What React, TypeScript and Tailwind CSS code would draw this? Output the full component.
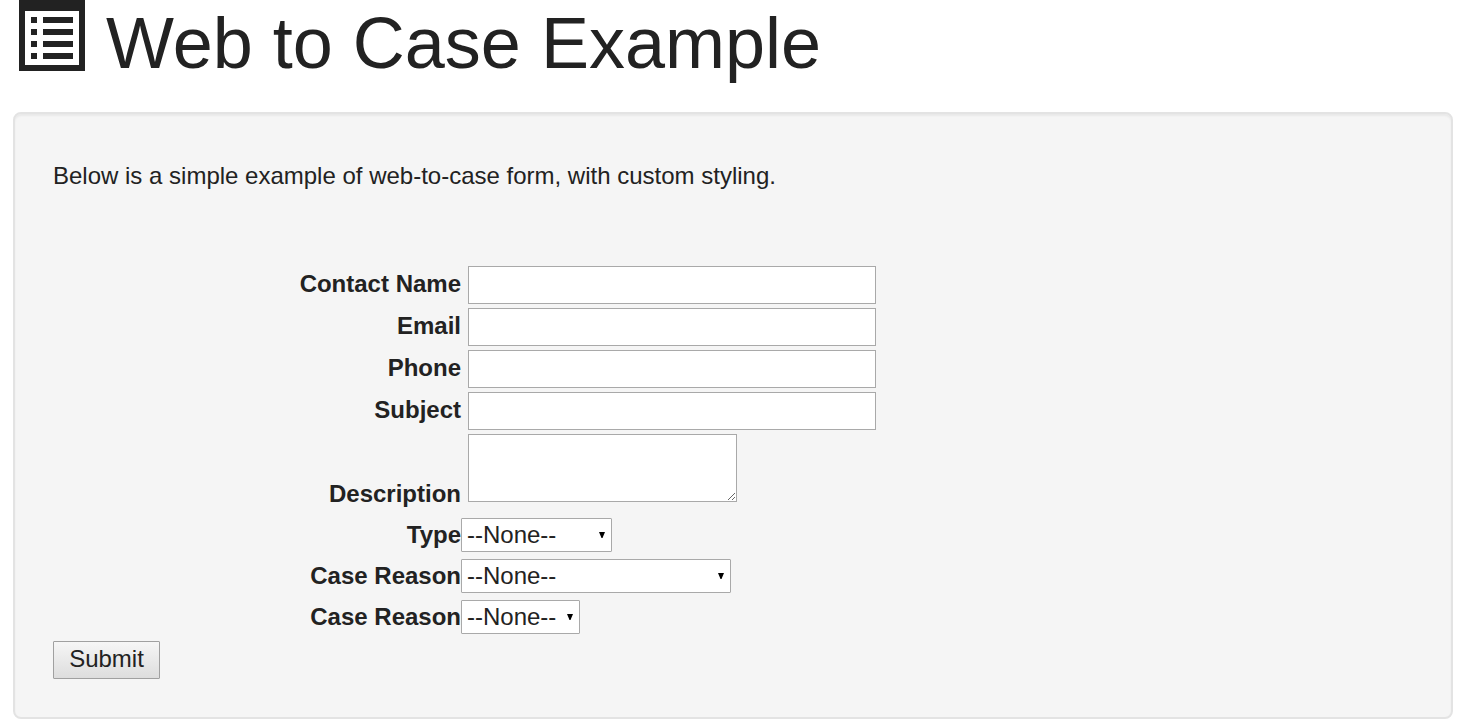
import type { ReactNode } from 'react';

const textFields = [
  { id: 'name', label: 'Contact Name', type: 'text' },
  { id: 'email', label: 'Email', type: 'email' },
  { id: 'phone', label: 'Phone', type: 'tel' },
  { id: 'subject', label: 'Subject', type: 'text' },
];

const selectFields = [
  { id: 'type', label: 'Type', width: 'w-[151px]' },
  { id: 'reason', label: 'Case Reason', width: 'w-[270px]' },
  { id: 'reason2', label: 'Case Reason', width: 'w-[119px]' },
];

const ListIcon = () => (
  <svg width="66" height="72" viewBox="0 0 66 72" shapeRendering="crispEdges" aria-hidden="true">
    <path fill="#222" fillRule="evenodd" d="M0 0h66v71H0zM6 11v54h54V11z" />
    <path
      fill="#222"
      d="M12 17h6v6h-6zM12 29h6v6h-6zM12 41h6v6h-6zM12 53h6v6h-6zM24 17h30v6H24zM24 29h30v6H24zM24 41h30v6H24zM24 53h30v6H24z"
    />
  </svg>
);

const FieldLabel = ({ id, children }: { id: string; children: ReactNode }) => (
  <label htmlFor={id} className="w-[408px] shrink-0 text-right font-bold leading-9">
    {children}
  </label>
);

export default function App() {
  return (
    <main className="bg-white pb-1 pl-[13px] pr-3 font-['Liberation_Sans',Arial,sans-serif] text-2xl text-[#222]">
      <h1 className="flex h-28 items-start gap-[21px] px-1.5 text-[72px] leading-[86px]">
        <ListIcon />
        Web to Case Example
      </h1>

      <section className="rounded-lg border-2 border-[#e3e3e3] bg-[#f5f5f5] p-[38px] shadow-[inset_0_2px_2px_rgba(0,0,0,0.05)]">
        <p className="pt-1.5 leading-9">Below is a simple example of web-to-case form, with custom styling.</p>

        <form className="pt-18" onSubmit={(e) => e.preventDefault()}>
          <div className="flex flex-col gap-1">
            {textFields.map((field) => (
              <div key={field.id} className="flex gap-[7px]">
                <FieldLabel id={field.id}>{field.label}</FieldLabel>
                <input
                  id={field.id}
                  type={field.type}
                  className="h-[38px] w-[408px] border border-[#a9a9a9] bg-white px-1"
                />
              </div>
            ))}
            {/* the label sits on the bottom edge of the text area */}
            <div className="flex items-end gap-[7px]">
              <FieldLabel id="description">Description</FieldLabel>
              <textarea
                id="description"
                className="mb-2.5 h-[68px] w-[269px] resize border border-[#a9a9a9] bg-white p-1"
              />
            </div>
          </div>

          <div className="flex flex-col gap-[7px] pt-1.5">
            {selectFields.map((field) => (
              <div key={field.id} className="flex h-[34px] items-center">
                <FieldLabel id={field.id}>{field.label}</FieldLabel>
                <div className={`relative ${field.width}`}>
                  <select
                    id={field.id}
                    className="block h-[34px] w-full appearance-none rounded-[1px] border border-[#a9a9a9] bg-white pl-[5px] leading-8"
                  >
                    <option>--None--</option>
                  </select>
                  <svg
                    className="pointer-events-none absolute right-[7px] top-[14px]"
                    width="6"
                    height="6"
                    viewBox="0 0 6 6"
                    aria-hidden="true"
                  >
                    <path fill="#000" d="M0 0h6L3.5 6h-1z" />
                  </svg>
                </div>
              </div>
            ))}
          </div>

          <button
            type="submit"
            className="mt-[7px] block h-[38px] w-[107px] rounded-[1px] border border-[#a0a0a0] bg-linear-to-b from-[#f6f6f6] to-[#dddddd] pb-0.5 leading-8"
          >
            Submit
          </button>
        </form>
      </section>
    </main>
  );
}
